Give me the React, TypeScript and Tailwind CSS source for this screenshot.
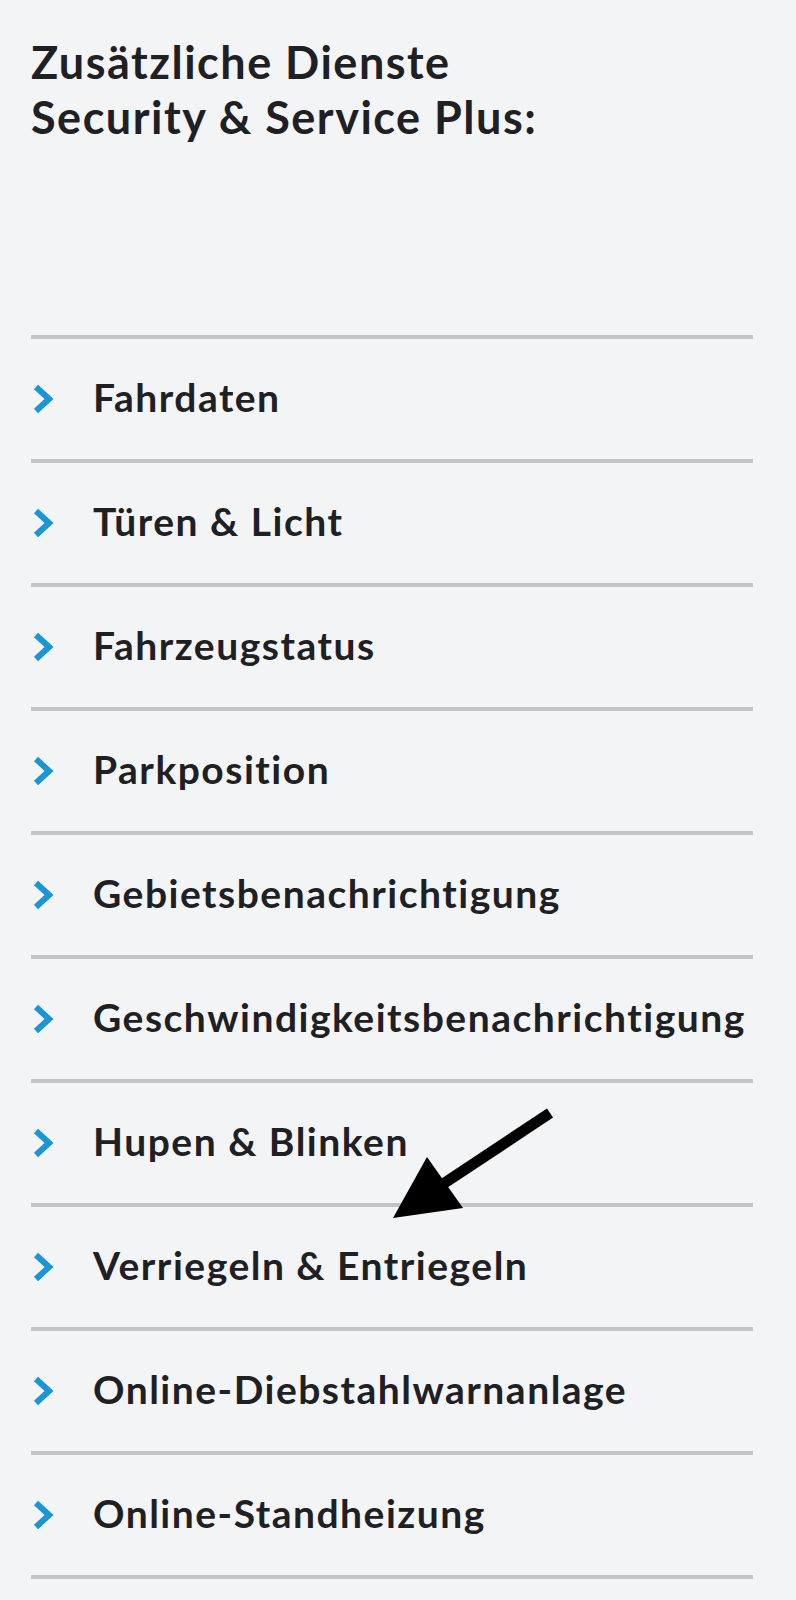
import React from "react";

const items = [
  "Fahrdaten",
  "Türen & Licht",
  "Fahrzeugstatus",
  "Parkposition",
  "Gebietsbenachrichtigung",
  "Geschwindigkeitsbenachrichtigung",
  "Hupen & Blinken",
  "Verriegeln & Entriegeln",
  "Online-Diebstahlwarnanlage",
  "Online-Standheizung",
];

function Chevron() {
  return (
    <svg width="20" height="30" viewBox="0 0 20 30" className="shrink-0">
      <polyline
        points="3,3 16,15 3,27"
        fill="none"
        stroke="#1b95d3"
        strokeWidth="6"
        strokeLinejoin="miter"
        strokeLinecap="butt"
      />
    </svg>
  );
}

export default function App() {
  return (
    <div
      className="relative min-h-[1600px] w-[796px] bg-[#f3f4f6] text-[#1e2024]"
      style={{ fontFamily: "Lato, 'Open Sans', sans-serif" }}
    >
      <div className="pl-[31px] pr-[43px] pt-[35px]">
        <h1 className="text-[45px] font-bold leading-[55px] tracking-[1.5px]">
          Zusätzliche Dienste
          <br />
          Security &amp; Service Plus:
        </h1>
        <div className="mt-[190px] border-b-4 border-[#c2c5c8]">
          {items.map((t) => (
            <div
              key={t}
              className="flex h-[124px] items-center border-t-4 border-[#c2c5c8] pl-[2px]"
            >
              <Chevron />
              <span className="ml-[40px] whitespace-nowrap text-[39px] font-bold tracking-[1.5px] -mt-[3px]">
                {t}
              </span>
            </div>
          ))}
        </div>
      </div>
      <svg
        className="pointer-events-none absolute left-[380px] top-[1100px]"
        width="200"
        height="130"
        viewBox="0 0 200 130"
      >
        <line x1="170" y1="13" x2="60" y2="86" stroke="#000" strokeWidth="11" />
        <polygon points="13,118 47,57 83,108" fill="#000" />
      </svg>
    </div>
  );
}
